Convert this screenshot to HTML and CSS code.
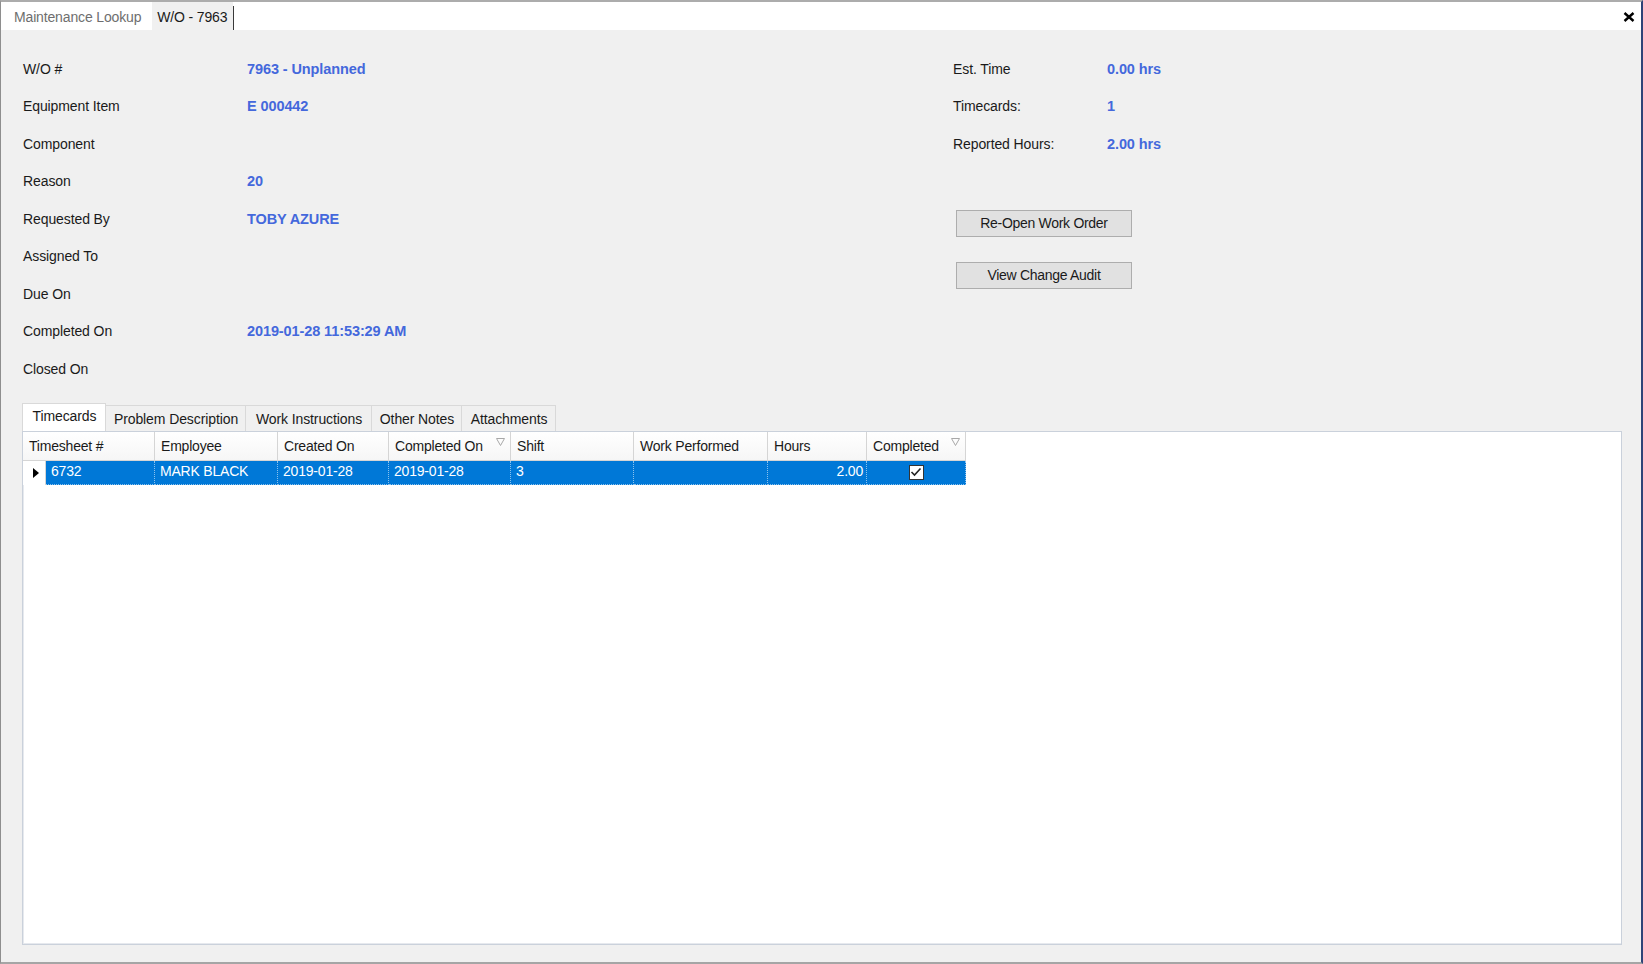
FILE: index.html
```html
<!DOCTYPE html>
<html>
<head>
<meta charset="utf-8">
<link rel="stylesheet" href="styles.css">
</head>
<body>
<div class="window">
  <div class="docbar">
    <div class="doctab">Maintenance Lookup</div>
    <div class="doctab active">W/O - 7963</div>
    <div class="caret"></div>
    <div class="spacer"></div>
    <svg class="close" width="12" height="10" viewBox="0 0 12 10"><path d="M1.5 1 L10.5 9 M10.5 1 L1.5 9" stroke="#000" stroke-width="2.4" fill="none"/></svg>
  </div>
  <div class="content">
    <div class="info">
      <div class="fields">
        <div class="lbl">W/O #</div><div class="val">7963 - Unplanned</div>
        <div class="lbl">Equipment Item</div><div class="val">E 000442</div>
        <div class="lbl">Component</div><div class="val"></div>
        <div class="lbl">Reason</div><div class="val">20</div>
        <div class="lbl">Requested By</div><div class="val">TOBY AZURE</div>
        <div class="lbl">Assigned To</div><div class="val"></div>
        <div class="lbl">Due On</div><div class="val"></div>
        <div class="lbl">Completed On</div><div class="val">2019-01-28 11:53:29 AM</div>
        <div class="lbl">Closed On</div><div class="val"></div>
      </div>
      <div class="side">
        <div class="stats">
          <div class="lbl">Est. Time</div><div class="val">0.00 hrs</div>
          <div class="lbl">Timecards:</div><div class="val">1</div>
          <div class="lbl">Reported Hours:</div><div class="val">2.00 hrs</div>
        </div>
        <div class="buttons">
          <button class="btn">Re-Open Work Order</button>
          <button class="btn">View Change Audit</button>
        </div>
      </div>
    </div>
    <div class="tabs">
      <div class="tab selected">Timecards</div>
      <div class="tab">Problem Description</div>
      <div class="tab">Work Instructions</div>
      <div class="tab">Other Notes</div>
      <div class="tab">Attachments</div>
    </div>
    <div class="panel">
      <div class="grid">
        <div class="hdr">
          <div class="hc">Timesheet #</div>
          <div class="hc">Employee</div>
          <div class="hc">Created On</div>
          <div class="hc filt">Completed On<svg class="fi" width="9" height="8" viewBox="0 0 9 8"><path d="M0.5 0.5 H8.5 L4.5 7.5 Z" fill="none" stroke="#a8a8a8" stroke-width="1"/></svg></div>
          <div class="hc">Shift</div>
          <div class="hc">Work Performed</div>
          <div class="hc">Hours</div>
          <div class="hc filt">Completed<svg class="fi" width="9" height="8" viewBox="0 0 9 8"><path d="M0.5 0.5 H8.5 L4.5 7.5 Z" fill="none" stroke="#a8a8a8" stroke-width="1"/></svg></div>
        </div>
        <div class="row">
          <div class="ind"><svg width="6" height="10" viewBox="0 0 6 10"><path d="M0 0 L6 5 L0 10 Z" fill="#000"/></svg></div>
          <div class="c c1">6732</div>
          <div class="c">MARK BLACK</div>
          <div class="c">2019-01-28</div>
          <div class="c">2019-01-28</div>
          <div class="c">3</div>
          <div class="c"></div>
          <div class="c num">2.00</div>
          <div class="c chk"><span class="box"><svg width="12" height="10" viewBox="0 0 12 10"><path d="M1.5 5 L4.5 8 L10.5 1.5" fill="none" stroke="#222" stroke-width="1.6"/></svg></span></div>
        </div>
      </div>
    </div>
  </div>
</div>
</body>
</html>
```
FILE: styles.css
```css
html, body {
  margin: 0;
  padding: 0;
}
body {
  width: 1643px;
  height: 964px;
  overflow: hidden;
  font-family: "Liberation Sans", Arial, sans-serif;
  font-size: 14px;
  color: #1a1a1a;
}
.window {
  box-sizing: border-box;
  width: 1643px;
  height: 964px;
  border-top: 2px solid #acacac;
  border-left: 1px solid #8e8e8e;
  border-right: 2px solid #2e4377;
  border-bottom: 2px solid #a5a5a5;
  background: #f0f0f0;
  display: flex;
  flex-direction: column;
}
.docbar {
  height: 28px;
  background: #ffffff;
  display: flex;
  align-items: stretch;
  flex: none;
}
.doctab {
  display: flex;
  align-items: center;
  padding: 2px 7px 0 13px;
  font-size: 14px;
  color: #6e6e6e;
  letter-spacing: -0.15px;
}
.doctab.active {
  background: #f0f0f0;
  color: #1a1a1a;
  padding: 2px 6px 0 5px;
  margin-left: 4px;
}
.caret {
  width: 1px;
  background: #3a3a3a;
  margin: 4px 0 0 0;
}
.spacer { flex: 1; }
.close {
  align-self: center;
  margin-right: 6px;
  margin-top: 2px;
}
.content {
  flex: 1;
  display: flex;
  flex-direction: column;
  padding: 20px 19px 17px 21px;
}
.info {
  display: flex;
  flex: none;
}
.fields {
  display: grid;
  grid-template-columns: 224px 706px;
  grid-auto-rows: 37.5px;
  align-items: center;
  padding-left: 1px;
}
.lbl {
  color: #1a1a1a;
  letter-spacing: -0.1px;
}
.val {
  color: #4468dc;
  font-weight: bold;
  font-size: 14.5px;
  letter-spacing: -0.1px;
}
.side {
  display: flex;
  flex-direction: column;
}
.stats {
  display: grid;
  grid-template-columns: 154px 120px;
  grid-auto-rows: 37.5px;
  align-items: center;
}
.buttons {
  display: flex;
  flex-direction: column;
  gap: 25px;
  margin-top: 47px;
  padding-left: 3px;
}
.btn {
  width: 176px;
  height: 27px;
  box-sizing: border-box;
  border: 1px solid #adadad;
  background: #e1e1e1;
  font-family: "Liberation Sans", Arial, sans-serif;
  font-size: 14px;
  color: #1a1a1a;
  letter-spacing: -0.3px;
  padding: 0;
}
.tabs {
  display: flex;
  align-items: flex-end;
  height: 28px;
  margin-top: 15px;
  flex: none;
}
.tab {
  box-sizing: border-box;
  height: 26px;
  display: flex;
  align-items: center;
  justify-content: center;
  padding: 0 6px 0 7px;
  border: 1px solid #d9d9d9;
  border-bottom: none;
  border-left: none;
  background: #f0f0f0;
  letter-spacing: -0.1px;
  padding-top: 2px;
}
.tab.selected {
  height: 28px;
  background: #ffffff;
  border-left: 1px solid #d9d9d9;
  padding: 0 7px 2px 8px;
  width: 84px;
}
.tab:nth-child(2) { width: 140px; }
.tab:nth-child(3) { width: 126px; }
.tab:nth-child(4) { width: 90px; }
.tab:nth-child(5) { width: 94px; }
.panel {
  flex: 1;
  border: 1px solid #cad1db;
  background: #ffffff;
  box-shadow: inset 0 -1px 0 #e6e9ee, inset 1px 0 0 #e6e9ee;
}
.grid {
  width: 943px;
}
.hdr {
  display: grid;
  grid-template-columns: 132px 123px 111px 122px 123px 134px 99px 99px;
  height: 29px;
}
.hc {
  box-sizing: border-box;
  display: flex;
  align-items: center;
  padding-left: 6px;
  background: linear-gradient(#ffffff, #f6f6f6);
  border-right: 1px solid #d5d5d5;
  border-bottom: 1px solid #d5d5d5;
  color: #1a1a1a;
  letter-spacing: -0.2px;
}
.hc.filt {
  justify-content: space-between;
  padding-right: 5px;
}
.fi { margin-top: -8px; }
.row {
  display: grid;
  grid-template-columns: 23px 109px 123px 111px 122px 123px 134px 99px 99px;
  height: 24px;
}
.ind {
  box-sizing: border-box;
  background: #ffffff;
  border-right: 1px solid #d5d5d5;
  display: flex;
  align-items: center;
  padding-left: 10px;
}
.c {
  box-sizing: border-box;
  background: #0078d7;
  color: #ffffff;
  display: flex;
  align-items: center;
  padding-left: 5px;
  padding-bottom: 2px;
  border-right: 1px dotted rgba(255,255,255,0.55);
  border-bottom: 1px dotted rgba(255,255,255,0.55);
  letter-spacing: -0.2px;
}
.c.c1 { padding-left: 5px; }
.c.num {
  justify-content: flex-end;
  padding-right: 3px;
}
.c.chk {
  justify-content: center;
  padding-left: 0;
  padding-right: 0;
  padding-bottom: 0;
}
.box {
  box-sizing: border-box;
  width: 15px;
  height: 15px;
  background: #ffffff;
  border: 1px solid #333;
  display: flex;
  align-items: center;
  justify-content: center;
}
```
